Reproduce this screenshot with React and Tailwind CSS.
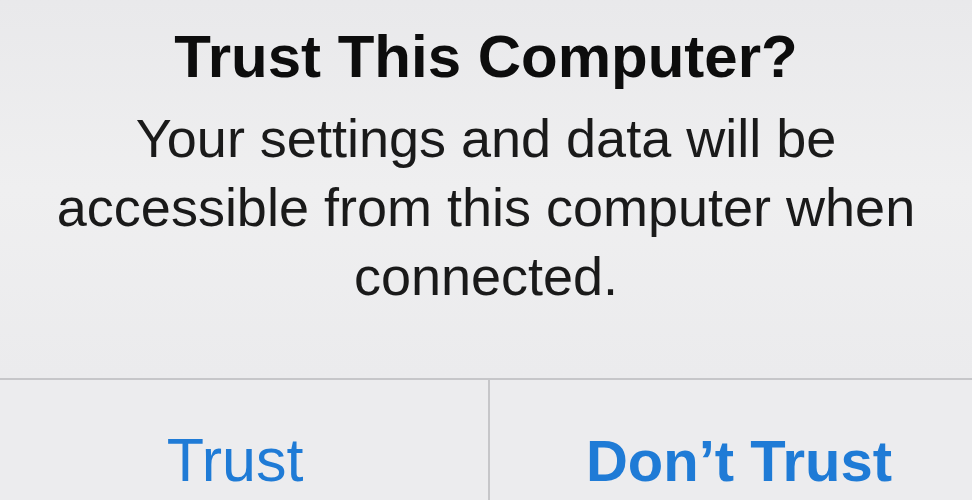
export default function App() {
    return (
        <div className="w-full h-[500px] overflow-hidden flex flex-col bg-[#ececee] font-['Liberation_Sans',Arial,sans-serif]">
            <div className="h-[378px] flex flex-col items-center pt-[27px] bg-gradient-to-b from-[#e9e9eb] via-[#efeff0] to-[#ebebed]">
                <h1 className="text-[60px] leading-[60px] font-bold text-[#0d0d0d] whitespace-nowrap">
                    Trust This Computer?
                </h1>
                <p className="mt-[17px] text-[54px] leading-[69px] text-[#1a1a1a] text-center whitespace-nowrap">
                    Your settings and data will be
                    <br />
                    accessible from this computer when
                    <br />
                    connected.
                </p>
            </div>
            <div className="h-[2px] bg-[#c6c6c9]"></div>
            <div className="flex-1 flex">
                <button className="w-[488px] flex justify-center pt-[50px] pr-[18px] text-[61px] leading-[61px] text-[#1f7bd6]">
                    Trust
                </button>
                <div className="w-[2px] bg-[#c6c6c9]"></div>
                <button className="flex-1 flex justify-center pt-[50px] pl-[16px] text-[58px] leading-[61px] font-bold text-[#1f7bd6] whitespace-nowrap">
                    Don’t Trust
                </button>
            </div>
        </div>
    )
}
